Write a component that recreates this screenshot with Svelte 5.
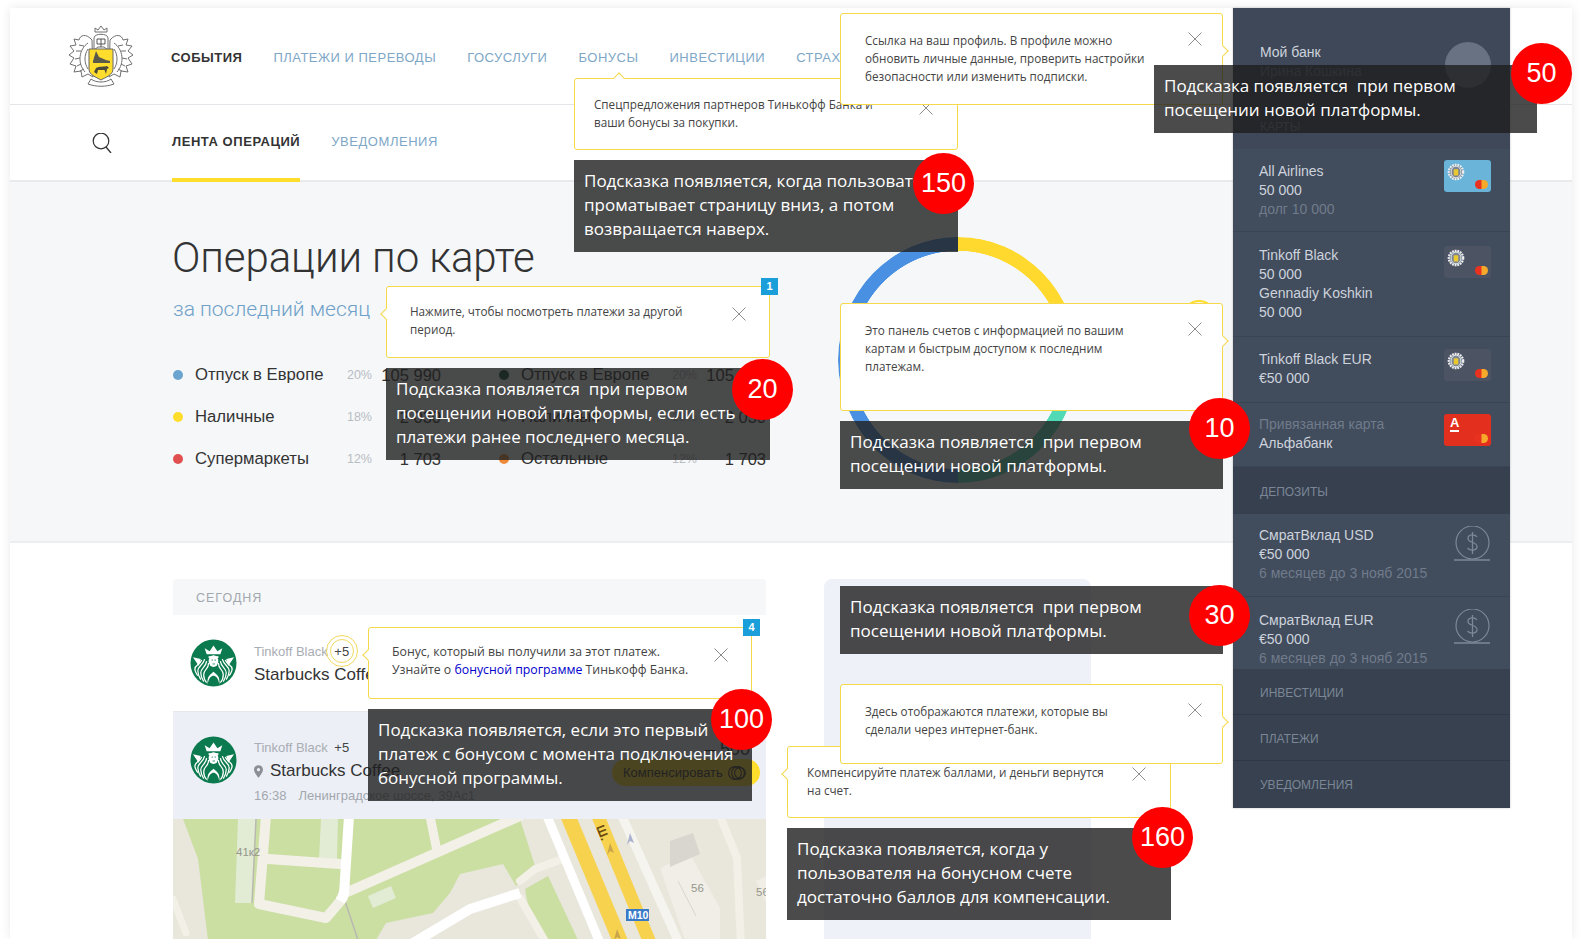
<script>
  const nav = ['События', 'Платежи и переводы', 'Госуслуги', 'Бонусы', 'Инвестиции', 'Страхование'];
  const legend = [
    { c: '#6ba4cf', l: 'Отпуск в Европе', p: '20%', a: '105 990' },
    { c: '#0f4d3a', l: 'Отпуск в Европе', p: '20%', a: '105 990' },
    { c: '#ffdd2d', l: 'Наличные', p: '18%', a: '2 030' },
    { c: '#8a8f96', l: 'Наличные', p: '18%', a: '2 030' },
    { c: '#e05050', l: 'Супермаркеты', p: '12%', a: '1 703' },
    { c: '#ee8a3c', l: 'Остальные', p: '12%', a: '1 703' }
  ];
  const accounts = [
    { cls: 'r1', lines: [['All Airlines'], ['50 000'], ['долг 10 000', 'mut']], card: 'sky' },
    { cls: 'r2', lines: [['Tinkoff Black'], ['50 000'], ['Gennadiy Koshkin'], ['50 000']], card: 'dim' },
    { cls: 'r3', lines: [['Tinkoff Black EUR'], ['€50 000']], card: 'dim' },
    { cls: 'r4', lines: [['Привязанная карта', 'mut'], ['Альфабанк']], card: 'red' }
  ];
  const deposits = [
    { cls: 'r5', name: 'СмратВклад USD' },
    { cls: 'r6', name: 'СмратВклад EUR' }
  ];
  const tips = [
    { cls: 'y-bonus', arrow: 'top', lines: ['Спецпредложения партнеров Тинькофф Банка и', 'ваши бонусы за покупки.'] },
    { cls: 'y-period', arrow: 'left', tag: '1', lines: ['Нажмите, чтобы посмотреть платежи за другой', 'период.'] },
    { cls: 'y-panel', arrow: 'right', lines: ['Это панель счетов с информацией по вашим', 'картам и быстрым доступом к последним', 'платежам.'] },
    { cls: 'y-points', arrow: 'left', tag: '4', link: true, lines: ['Бонус, который вы получили за этот платеж.'] },
    { cls: 'y-comp', arrow: 'left', lines: ['Компенсируйте платеж баллами, и деньги вернутся', 'на счет.'] },
    { cls: 'y-here', arrow: 'right', lines: ['Здесь отображаются платежи, которые вы', 'сделали через интернет-банк.'] },
    { cls: 'y-profile', arrow: 'right', lines: ['Ссылка на ваш профиль. В профиле можно', 'обновить личные данные, проверить настройки', 'безопасности или изменить подписки.'] }
  ];
  const notes = [
    { cls: 'd-150', n: 150, lines: ['Подсказка появляется, когда пользователь', 'проматывает страницу вниз, а потом', 'возвращается наверх.'] },
    { cls: 'd-20', n: 20, lines: ['Подсказка появляется  при первом', 'посещении новой платформы, если есть', 'платежи ранее последнего месяца.'] },
    { cls: 'd-10', n: 10, lines: ['Подсказка появляется  при первом', 'посещении новой платформы.'] },
    { cls: 'd-30', n: 30, lines: ['Подсказка появляется  при первом', 'посещении новой платформы.'] },
    { cls: 'd-100', n: 100, lines: ['Подсказка появляется, если это первый', 'платеж с бонусом с момента подключения', 'бонусной программы.'] },
    { cls: 'd-160', n: 160, lines: ['Подсказка появляется, когда у', 'пользователя на бонусном счете', 'достаточно баллов для компенсации.'] },
    { cls: 'd-50', n: 50, lines: ['Подсказка появляется  при первом', 'посещении новой платформы.'] }
  ];
</script>

{#snippet crest()}
  <svg class="logo" viewBox="0 0 66 62" aria-hidden="true">
    <g fill="#fff" stroke="#6f6f6f" stroke-width="1" stroke-linejoin="round">
      <path d="M24 15 C18 8 12 10 11 15 L6 14 L8 20 L2 21 L6 26 L1 30 L6 33 L2 39 L8 41 L6 47 L13 46 L14 52 L20 49 L25 52 Z" />
      <path d="M42 15 C48 8 54 10 55 15 L60 14 L58 20 L64 21 L60 26 L65 30 L60 33 L64 39 L58 41 L60 47 L53 46 L52 52 L46 49 L41 52 Z" />
      <path d="M20 18 C11 24 9 38 17 47 M16 21 L11 20 M13 26 L8 26 M12 33 L7 34 M13 39 L9 41 M16 44 L12 46 M20 24 C16 30 16 38 20 44" fill="none" />
      <path d="M46 18 C55 24 57 38 49 47 M50 21 L55 20 M53 26 L58 26 M54 33 L59 34 M53 39 L57 41 M50 44 L54 46 M46 24 C50 30 50 38 46 44" fill="none" />
      <path d="M26 25 V13 C26 8 40 8 40 13 V25 L36 22 H30 Z" />
      <path d="M27 7 L27 3 L30 5 L33 1 L36 5 L39 3 L39 7 Z" />
      <path d="M23 54 C28 58 38 58 43 54 L46 59 C38 62 28 62 20 59 Z" />
    </g>
    <path d="M29 14 H37 V19 H29 Z M33 14 V22" stroke="#555" stroke-width="1" fill="none" />
    <path d="M21 24 H45 V44 C45 50 38 52 33 55 C28 52 21 50 21 44 Z" fill="#ffdd2d" stroke="#666" stroke-width="1" />
    <path d="M25 36 L28 26 L31 32 L38 35 L42 36 V38 H25 Z" fill="#5a5a4a" />
    <path d="M26 47 L28 43 C31 41 36 42 39 41 L41 43 L39 44 L38 49 L36.500 45 L30 45 L29 49 Z" fill="#4a4a3a" />
  </svg>
{/snippet}

{#snippet miniCrest()}
  <svg class="mini" viewBox="0 0 20 20" aria-hidden="true">
    <ellipse cx="10" cy="10" rx="8" ry="8" fill="#7d8693" stroke="#eceef1" stroke-width="2.500" stroke-dasharray="2 1" />
    <ellipse cx="10" cy="10" rx="5.500" ry="6.500" fill="none" stroke="#eceef1" stroke-width="1" />
    <rect x="7.500" y="7" width="5" height="7" rx="1" fill="#e9c92f" />
  </svg>
{/snippet}

{#snippet siren()}
  <svg class="siren" viewBox="0 0 48 48" aria-hidden="true">
    <ellipse cx="24" cy="24" rx="23.500" ry="24" fill="#0b7a4e" />
    <path d="M17 15 L15 9 L20 12 L24 6 L28 12 L33 9 L31 15 Z" fill="#fff" />
    <path d="M3 18 L11 20 L9 27 Z M45 18 L37 20 L39 27 Z" fill="#fff" />
    <ellipse cx="24" cy="22" rx="5" ry="6" fill="#fff" />
    <path d="M19 17 H29 V19 H19 Z" fill="#fff" />
    <path d="M22 21 h1.500 M25 21 h1.500 M23 25 h2.500" stroke="#0b7a4e" stroke-width=".8" />
    <g fill="none" stroke="#fff" stroke-width="1.300">
      <path d="M19 24 C19 31 14 30 14 36 C14 39 15 42 17 44" />
      <path d="M17 22 C16 29 11 29 11 34 C11 37 12 40 14 43" />
      <path d="M15 20 C13 27 8 27 8 32 C8 35 9 38 11 41" />
      <path d="M12 21 C10 26 5 26 5 30 C5 32 6 34 8 37" />
      <path d="M29 24 C29 31 34 30 34 36 C34 39 33 42 31 44" />
      <path d="M31 22 C32 29 37 29 37 34 C37 37 36 40 34 43" />
      <path d="M33 20 C35 27 40 27 40 32 C40 35 39 38 37 41" />
      <path d="M36 21 C38 26 43 26 43 30 C43 32 42 34 40 37" />
    </g>
    <path d="M18 46 C17 37 21 36 24 33 C27 36 31 37 30 46 C29 39 26 37 24 37 C22 37 19 39 18 46 Z" fill="#fff" />
  </svg>
{/snippet}

{#snippet close()}
  <svg class="close" viewBox="0 0 14 14" aria-hidden="true">
    <path d="M.5.5 13.5 13.500M13.500.5.5 13.500" stroke="#8c8c8c" stroke-width="1" fill="none" />
  </svg>
{/snippet}

{#snippet coin()}
  <svg class="coin" viewBox="0 0 38 36" aria-hidden="true">
    <circle cx="19.500" cy="16.500" r="16.500" fill="none" stroke="#7d8897" stroke-width="1.200" />
    <path d="M1 34 H37" stroke="#7d8897" stroke-width="1.600" />
    <path d="M24 11 C22 8 15 8 15 12.500 C15 17 24 15.500 24 20.500 C24 25 17 25 14.500 22 M19.500 6 V28" fill="none" stroke="#7d8897" stroke-width="1.300" />
  </svg>
{/snippet}

<div class="shell">
  <main class="main">
    <header class="topbar">
      {@render crest()}
      <nav class="nav">
        {#each nav as item, i}
          <span class:on={i === 0}>{item}</span>
        {/each}
      </nav>
    </header>

    <div class="subbar">
      <svg class="search" viewBox="0 0 20 20" aria-hidden="true">
        <circle cx="9" cy="8" r="7.800" fill="none" stroke="#333" stroke-width="1.200" />
        <path d="M14 14 L19 20" stroke="#333" stroke-width="1.300" />
      </svg>
      <div class="tabs">
        <span class="tab on">Лента операций</span>
        <span class="tab">Уведомления</span>
      </div>
    </div>

    <section class="overview">
      <div class="summary">
        <h1>Операции по карте</h1>
        <p class="period">за последний месяц</p>
        <div class="legend">
          {#each legend as row}
            <div class="lrow">
              <i class="dot" style="background:{row.c}"></i>
              <span class="llabel">{row.l}</span>
              <span class="lpct">{row.p}</span>
              <span class="lamt">{row.a}</span>
            </div>
          {/each}
        </div>
      </div>
      <div class="ring"></div>
    </section>

    <section class="feed">
      <div class="ops">
        <div class="day">Сегодня</div>
        <div class="op">
          {@render siren()}
          <div class="opbody">
            <div class="opmeta">Tinkoff Black <b class="plus pulse">+5</b></div>
            <div class="opname">Starbucks Coffee</div>
          </div>
        </div>
        <div class="op open">
          {@render siren()}
          <div class="opbody">
            <div class="opmeta">Tinkoff Black <b class="plus">+5</b></div>
            <div class="opname">
              <svg class="pin" viewBox="0 0 10 14" aria-hidden="true"><path d="M5 0 C2 0 0 2 0 5 C0 8 5 14 5 14 C5 14 10 8 10 5 C10 2 8 0 5 0Z M5 3.200 A1.800 1.800 0 1 1 5 6.800 A1.800 1.800 0 1 1 5 3.200Z" fill="#8b9098" fill-rule="evenodd" /></svg>
              Starbucks Coffee
            </div>
            <div class="opplace"><span>16:38</span><span>Ленинградское шоссе, 39Ас1</span></div>
          </div>
          <div class="opside">
            <div class="sum">– 500</div>
            <div class="comp">Компенсировать
              <svg class="toggle" viewBox="0 0 18 14" aria-hidden="true"><g fill="none" stroke="#333" stroke-width="1.100"><circle cx="7" cy="7" r="6.400" /><circle cx="10" cy="7" r="6.400" /><circle cx="12" cy="7" r="5.400" /></g></svg>
            </div>
          </div>
        </div>
        <svg class="map" viewBox="173 818 593 121" aria-label="Карта">
          <rect x="173" y="818" width="593" height="121" fill="#e9e6dc" />
          <path d="M183 818 H520 L536 868 L516 885 L503 863 L460 873 L450 892 L433 912 L386 922 L376 939 H208 L198 858 Z" fill="#cbdfa3" />
          <path d="M525 888 L548 875 L578 939 H546 L528 905 Z" fill="#cbdfa3" />
          <path d="M238 818 H256 L252 902 H235 Z M321 818 H338 L337 858 H319 Z M368 895 L391 885 L396 897 L373 907 Z" fill="#e2ecd5" />
          <path d="M256 818 L252 902 M345 900 L358 939" stroke="#b9b9b0" stroke-width="1.500" fill="none" />
          <g fill="none" stroke="#f3f0e7" stroke-linecap="round" stroke-linejoin="round">
            <path d="M266 815 L259 903 L326 917 L343 897" stroke-width="10" />
            <path d="M268 858 L340 863" stroke-width="10" />
            <path d="M343 893 L520 815" stroke-width="10" />
            <path d="M430 815 L437 850" stroke-width="9" />
            <path d="M520 880 L535 868 L563 858" stroke-width="8" />
            <path d="M520 897 L546 942" stroke-width="8" />
            <path d="M173 898 L186 932" stroke-width="7" />
            <path d="M720 815 L737 857 L741 945" stroke-width="8" />
          </g>
          <path d="M349 815 L344 893 L340 900" stroke="#fff" stroke-width="10" fill="none" />
          <path d="M413 942 L470 908 L520 892" stroke="#fff" stroke-width="10" fill="none" />
          <path d="M547 815 L600 942" stroke="#fff" stroke-width="9" fill="none" />
          <path d="M568 815 L621 942" stroke="#f7d24f" stroke-width="15" fill="none" />
          <path d="M598 815 L650 942" stroke="#f7d24f" stroke-width="13" fill="none" />
          <path d="M622 815 L679 942" stroke="#f6f4ee" stroke-width="9" fill="none" />
          <path d="M660 867 L690 853 L720 907 V939 H685 Z" fill="#f0eee7" />
          <path d="M670 840 L693 832 L700 853 L670 866 Z" fill="#d8d6ce" />
          <path d="M678 880 L696 915" stroke="#d8d6ce" fill="none" />
          <path d="M756 880 L766 875 V902 H766 Z" fill="#f0eee7" />
          <path d="M630 832 L634 842 L630 840 L627 844 Z" fill="#aab2cf" />
          <path d="M610 842 L614 852 L610 850 L607 854 Z M617 928 L621 938 L617 936 L614 939 Z" fill="#c9a64a" />
          <text class="mapt" x="236" y="855">41к2</text>
          <text class="mapt" x="691" y="891">56</text>
          <text class="mapt" x="756" y="895">56</text>
          <text class="road" transform="translate(596 826) rotate(68)">Ш.</text>
          <rect x="626" y="908" width="23" height="12" fill="#3a7bc8" />
          <text class="m10" x="628" y="918">М10</text>
        </svg>
      </div>
      <div class="aside"></div>
    </section>
  </main>

  <aside class="drawer">
    <div class="me">
      <div class="who">
        <div>Мой банк</div>
        <div class="mut">Ирина Кошкина</div>
      </div>
      <i class="avatar"></i>
      <div class="cap cardscap">Карты</div>
    </div>
    {#each accounts as acc}
      <div class="acct {acc.cls}">
        <div class="atext">
          {#each acc.lines as ln}
            <div class={ln[1]}>{ln[0]}</div>
          {/each}
        </div>
        <div class="thumb {acc.card}">
          {#if acc.card === 'red'}
            <span class="alfa">А</span>
          {:else}
            {@render miniCrest()}
          {/if}
          <i class="mc"></i>
        </div>
      </div>
    {/each}
    <div class="group dep">Депозиты</div>
    {#each deposits as d}
      <div class="acct {d.cls}">
        <div class="atext">
          <div>{d.name}</div>
          <div>€50 000</div>
          <div class="mut">6 месяцев до 3 нояб 2015</div>
        </div>
        {@render coin()}
      </div>
    {/each}
    <div class="group">Инвестиции</div>
    <div class="group">Платежи</div>
    <div class="group last">Уведомления</div>
  </aside>

  <div class="marker"></div>

  <div class="layer">
    {#each tips as t}
      <div class="tip {t.cls} {t.arrow}">
        {#each t.lines as ln}<div>{ln}</div>{/each}
        {#if t.link}
          <div>Узнайте о <a href="#bonus">бонусной программе</a> Тинькофф Банка.</div>
        {/if}
        {@render close()}
        {#if t.tag}<span class="tag">{t.tag}</span>{/if}
      </div>
    {/each}
    {#each notes as n}
      <div class="note {n.cls}">
        {#each n.lines as ln}<div>{ln}</div>{/each}
        <span class="num">{n.n}</span>
      </div>
    {/each}
  </div>
</div>

<style>
  :global(body) { background: #fff; font-family: "Liberation Sans", Arial, sans-serif; }
  .shell {
    position: relative;
    width: 1562px;
    height: 931px;
    margin: 8px 0 0 10px;
    background: #fff;
    box-shadow: 0 0 10px rgba(0, 0, 0, .09);
  }
  .main { height: 100%; display: flex; flex-direction: column; overflow: hidden; }

  .topbar {
    height: 97px;
    flex: none;
    display: flex;
    align-items: center;
    border-bottom: 1px solid #e4e6e9;
    box-sizing: border-box;
  }
  .logo { width: 66px; height: 62px; margin: 0 37px 0 58px; flex: none; }
  .nav { display: flex; gap: 31px; white-space: nowrap; position: relative; top: 1px; }
  .nav span { font-size: 13px; letter-spacing: .5px; text-transform: uppercase; color: #7ea7c7; }
  .nav .on { color: #333; font-weight: 700; }

  .subbar {
    height: 77px;
    flex: none;
    display: flex;
    box-sizing: border-box;
    border-bottom: 2px solid #e8eaec;
  }
  .search { width: 20px; height: 20px; margin: 28px 60px 0 82px; }
  .tabs { display: flex; gap: 31px; }
  .tab {
    height: 77px;
    box-sizing: border-box;
    padding-top: 29px;
    font-size: 13px;
    letter-spacing: .55px;
    text-transform: uppercase;
    color: #7ea7c7;
  }
  .tab.on { color: #333; font-weight: 700; border-bottom: 4px solid #ffdd2d; }

  .overview {
    height: 361px;
    flex: none;
    box-sizing: border-box;
    display: flex;
    padding-left: 162px;
    background: #f5f7f9;
    border-bottom: 2px solid #eceef0;
  }
  .summary { width: 666px; flex: none; }
  h1 {
    margin: 49px 0 0;
    font: 300 42px/54px Roboto, sans-serif;
    color: #333;
    letter-spacing: -.1px;
    white-space: nowrap;
  }
  .period { margin: 10px 0 0 1px; font: 300 21px/28px Roboto, sans-serif; color: #6fa0c8; }
  .legend {
    width: 594px;
    margin-top: 31px;
    display: grid;
    grid-template-columns: 269px 268px;
    column-gap: 57px;
    grid-auto-rows: 42px;
  }
  .lrow { display: flex; align-items: center; color: #333; font-size: 16.700px; white-space: nowrap; }
  .dot { width: 10px; height: 10px; border-radius: 50%; margin: 0 12px 0 1px; flex: none; }
  .llabel { flex: 1; }
  .lpct { font-size: 12.500px; color: #b9bdc2; width: 32px; text-align: right; }
  .lamt { width: 69px; text-align: right; font-size: 16.500px; }
  .ring {
    width: 240px;
    height: 246px;
    margin-top: 55px;
    border-radius: 50%;
    background: conic-gradient(#ffd92e 0 90deg, #52d9b5 116deg 180deg, #4a90e2 180deg 360deg);
    -webkit-mask: radial-gradient(closest-side, transparent 88.500%, #000 89%);
    mask: radial-gradient(closest-side, transparent 88.500%, #000 89%);
  }

  .feed { flex: 1; display: flex; padding: 36px 0 0 163px; min-height: 0; }
  .ops { width: 593px; flex: none; display: flex; flex-direction: column; }
  .day {
    height: 36px;
    flex: none;
    padding: 12px 0 0 23px;
    box-sizing: border-box;
    background: #f5f7f9;
    border-radius: 3px 3px 0 0;
    font-size: 12.500px;
    letter-spacing: 1px;
    text-transform: uppercase;
    color: #a3a8ae;
  }
  .op {
    height: 96px;
    flex: none;
    box-sizing: border-box;
    display: flex;
    padding: 24px 0 0 17px;
    position: relative;
  }
  .op.open { height: 108px; padding-top: 24px; background: #eceff6; border-top: 1px solid #e6e8ec; }
  .siren { width: 47px; height: 48px; flex: none; margin-right: 17px; }
  .opbody { padding-top: 5px; white-space: nowrap; min-width: 0; }
  .open .opbody { padding-top: 4px; }
  .opmeta { font-size: 13px; line-height: 16px; color: #a9adb3; }
  .plus { font-weight: 400; color: #444; margin-left: 3px; position: relative; }
  .pulse::before {
    content: "";
    position: absolute;
    left: -4px;
    top: -5px;
    width: 22px;
    height: 22px;
    border: 1px solid #f2d95f;
    border-radius: 50%;
    outline: 1px solid #f2d95f;
    outline-offset: 3px;
  }
  .opname { margin-top: 4px; font-size: 17px; line-height: 22px; color: #333; display: flex; align-items: center; gap: 7px; }
  .pin { width: 9px; height: 13px; flex: none; margin: 0; }
  .opplace { margin-top: 6px; display: flex; gap: 12px; font-size: 13px; color: #a3a8ae; }
  .opside { position: absolute; right: 6px; top: 26px; display: flex; flex-direction: column; align-items: flex-end; }
  .sum { font-size: 18px; color: #333; margin: 0 10px 0 0; line-height: 22px; }
  .comp {
    margin-top: -1px;
    width: 148px;
    height: 27px;
    box-sizing: border-box;
    padding-left: 11px;
    background: #ffdd2d;
    border-radius: 14px;
    font-size: 13px;
    color: #333;
    display: flex;
    align-items: center;
    gap: 5px;
    white-space: nowrap;
  }
  .toggle { width: 18px; height: 14px; }
  .map { width: 593px; height: 121px; display: block; flex: none; }
  .mapt { font: 11.500px "Liberation Sans", sans-serif; fill: #96968c; }
  .road { font: 700 12px "Liberation Sans", sans-serif; fill: #6b4a10; }
  .m10 { font: 700 10.500px "Liberation Sans", sans-serif; fill: #fff; }
  .aside {
    width: 267px;
    margin-left: 58px;
    flex: none;
    background: #eef1f7;
    border-radius: 8px 8px 0 0;
  }

  .drawer {
    position: absolute;
    left: 1223px;
    top: 0;
    width: 277px;
    height: 800px;
    background: #3a4453;
    color: #cdd3dc;
    font: 14px/19px "Liberation Sans", sans-serif;
    display: flex;
    flex-direction: column;
    box-shadow: 0 0 2px rgba(0, 0, 0, .25);
  }
  .me { height: 141px; flex: none; position: relative; box-sizing: border-box; padding: 35px 0 0 27px; background: #3e4858; }
  .avatar { position: absolute; left: 212px; top: 34px; width: 46px; height: 46px; border-radius: 50%; background: #697282; }
  .cap, .group { font-size: 12px; text-transform: uppercase; color: #7b8696; }
  .cardscap { position: absolute; left: 27px; top: 110px; }
  .acct {
    flex: none;
    box-sizing: border-box;
    position: relative;
    padding: 13px 0 0 26px;
    background: #414c5c;
    border-bottom: 1px solid #3a4453;
    white-space: nowrap;
    overflow: hidden;
  }
  .mut { color: #707b8b; }
  .r1 { height: 83px; }
  .r2 { height: 105px; padding-top: 14px; }
  .r3 { height: 66px; }
  .r4 { height: 64px; padding-top: 12px; }
  .r5 { height: 83px; padding-top: 12px; }
  .r6 { height: 72px; padding-top: 14px; border-bottom: 0; }
  .thumb { position: absolute; left: 211px; top: 11px; width: 47px; height: 32px; border-radius: 3px; }
  .r2 .thumb { top: 14px; }
  .r3 .thumb { top: 12px; }
  .sky { background: #69b4d8; }
  .dim { background: #4c5463; }
  .red { background: #e3301e; }
  .mini { position: absolute; left: 3px; top: 3px; width: 18px; height: 18px; }
  .mc {
    position: absolute;
    right: 3px;
    bottom: 3px;
    width: 13px;
    height: 9px;
    border-radius: 5px;
    background: linear-gradient(90deg, #e8321f 0 45%, #f6a92a 55%);
  }
  .alfa {
    position: absolute;
    left: 6px;
    top: 2px;
    font: 700 13px/14px "Liberation Sans", sans-serif;
    color: #fff;
    border-bottom: 2px solid #fff;
  }
  .coin { position: absolute; right: 19px; top: 12px; width: 38px; height: 36px; }
  .group { flex: none; height: 46px; box-sizing: border-box; padding: 15px 0 0 27px; border-bottom: 1px solid #2f3846; background: #37414f; }
  .dep { height: 47px; background: #36404f; border: 0; padding-top: 16px; }
  .last { flex: 1; border-bottom: 0; padding-top: 15px; }

  .marker {
    position: absolute;
    left: 1172px;
    top: 292px;
    width: 34px;
    height: 34px;
    border: 2px solid #ffdd2d;
    box-sizing: border-box;
    border-radius: 50%;
  }

  .layer { position: absolute; left: -10px; top: -8px; width: 0; height: 0; }
  .tip {
    position: absolute;
    box-sizing: border-box;
    padding: var(--pt, 17px) 0 0 var(--pl, 24px);
    background: #fff;
    border: 1px solid #f5d94a;
    border-radius: 3px;
    font: 11.700px/18px "Open Sans", sans-serif;
    color: #444;
    white-space: nowrap;
  }
  .tip a { color: #0000cc; text-decoration: none; }
  .tip::before {
    content: "";
    position: absolute;
    width: 7px;
    height: 7px;
    background: #fff;
    border: 1px solid #f5d94a;
    border-width: 1px 0 0 1px;
  }
  .left::before { left: -5px; top: var(--ay); transform: rotate(-45deg); }
  .right::before { right: -5px; top: var(--ay); transform: rotate(135deg); }
  .top::before { top: -5px; left: var(--ax); transform: rotate(45deg); }
  .close { position: absolute; right: var(--cr, 23px); top: var(--ct, 19px); width: 14px; height: 14px; }
  .tag {
    position: absolute;
    right: -9px;
    top: -9px;
    width: 17px;
    height: 17px;
    background: #1a9fdb;
    color: #fff;
    font: 700 11px/17px "Liberation Sans", sans-serif;
    text-align: center;
  }
  .y-bonus { left: 574px; top: 78px; width: 384px; height: 72px; --pl: 19px; --pt: 16px; --ax: 40px; --cr: 24px; --ct: 22px; }
  .y-period { left: 386px; top: 286px; width: 384px; height: 72px; --pl: 23px; --pt: 15px; --ay: 23px; --cr: 23px; --ct: 20px; }
  .y-panel { left: 840px; top: 303px; width: 383px; height: 108px; --ay: 33px; --cr: 20px; --ct: 18px; }
  .y-points { left: 368px; top: 627px; width: 384px; height: 72px; font-size: 12.300px; --pl: 23px; --pt: 15px; --ay: 23px; --cr: 23px; --ct: 20px; }
  .y-comp { left: 787px; top: 746px; width: 384px; height: 72px; --pl: 19px; --pt: 16px; --ay: 23px; --cr: 24px; --ct: 20px; }
  .y-here { left: 840px; top: 684px; width: 383px; height: 80px; --ay: 33px; --cr: 20px; --ct: 18px; }
  .y-profile { left: 840px; top: 13px; width: 383px; height: 92px; --ay: 33px; --cr: 20px; --ct: 18px; }

  .note {
    position: absolute;
    box-sizing: border-box;
    padding: 9px 0 0 10px;
    background: rgba(30, 30, 30, .8);
    color: #fff;
    font: 17px/24px "Open Sans", sans-serif;
    white-space: pre;
  }
  .num {
    position: absolute;
    right: var(--nr);
    top: var(--nt);
    width: 61px;
    height: 61px;
    border-radius: 50%;
    background: #f00;
    color: #fff;
    font: 27px/61px "Liberation Sans", sans-serif;
    text-align: center;
  }
  .d-150 { left: 574px; top: 160px; width: 384px; height: 92px; --nr: -16px; --nt: -7px; }
  .d-20 { left: 386px; top: 368px; width: 384px; height: 92px; --nr: -23px; --nt: -9px; }
  .d-10 { left: 840px; top: 421px; width: 383px; height: 68px; --nr: -27px; --nt: -23px; }
  .d-30 { left: 840px; top: 586px; width: 383px; height: 68px; --nr: -27px; --nt: -1px; }
  .d-100 { left: 368px; top: 709px; width: 384px; height: 92px; --nr: -20px; --nt: -20px; }
  .d-160 { left: 787px; top: 828px; width: 384px; height: 92px; --nr: -22px; --nt: -21px; }
  .d-50 { left: 1154px; top: 65px; width: 383px; height: 68px; --nr: -35px; --nt: -22px; }
</style>
